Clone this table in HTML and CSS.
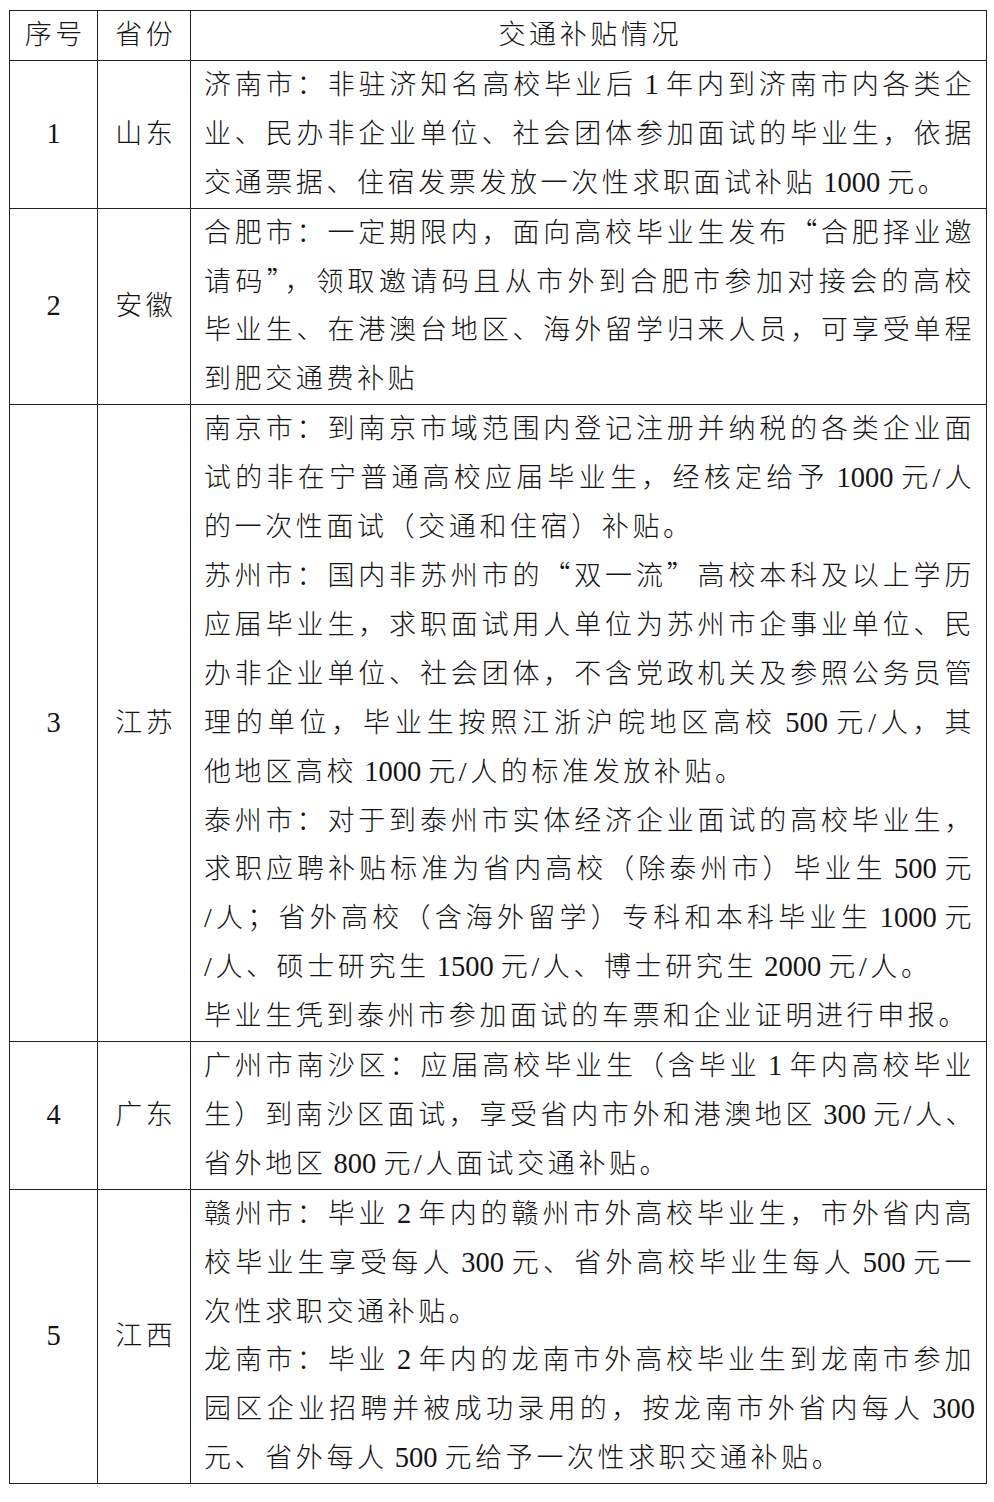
FILE: index.html
```html
<!DOCTYPE html>
<html lang="zh-CN">
<head>
<meta charset="utf-8">
<title>交通补贴情况</title>
<link rel="stylesheet" href="styles.css">
</head>
<body>
<table class="grid">
  <colgroup>
    <col class="c-no">
    <col class="c-prov">
    <col class="c-desc">
  </colgroup>
  <thead>
    <tr>
      <th class="center">序号</th>
      <th class="center">省份</th>
      <th class="center">交通补贴情况</th>
    </tr>
  </thead>
  <tbody>
    <tr>
      <td class="num"><span class="n">1</span></td>
      <td class="center">山东</td>
      <td class="desc">
        <div class="ln full">济南市：非驻济知名高校毕业后<span class="n"> 1 </span>年内到济南市内各类企</div>
        <div class="ln full">业、民办非企业单位、社会团体参加面试的毕业生，依据</div>
        <div class="ln">交通票据、住宿发票发放一次性求职面试补贴<span class="n"> 1000 </span>元。</div>
      </td>
    </tr>
    <tr>
      <td class="num"><span class="n">2</span></td>
      <td class="center">安徽</td>
      <td class="desc">
        <div class="ln full">合肥市：一定期限内，面向高校毕业生发布<span class="q">“</span>合肥择业邀</div>
        <div class="ln full">请码<span class="q">”</span>，领取邀请码且从市外到合肥市参加对接会的高校</div>
        <div class="ln full">毕业生、在港澳台地区、海外留学归来人员，可享受单程</div>
        <div class="ln">到肥交通费补贴</div>
      </td>
    </tr>
    <tr>
      <td class="num"><span class="n">3</span></td>
      <td class="center">江苏</td>
      <td class="desc">
        <div class="ln full">南京市：到南京市域范围内登记注册并纳税的各类企业面</div>
        <div class="ln full">试的非在宁普通高校应届毕业生，经核定给予<span class="n"> 1000 </span>元<span class="s">/</span>人</div>
        <div class="ln">的一次性面试（交通和住宿）补贴。</div>
        <div class="ln full">苏州市：国内非苏州市的<span class="q">“</span>双一流<span class="q">”</span>高校本科及以上学历</div>
        <div class="ln full">应届毕业生，求职面试用人单位为苏州市企事业单位、民</div>
        <div class="ln full">办非企业单位、社会团体，不含党政机关及参照公务员管</div>
        <div class="ln full">理的单位，毕业生按照江浙沪皖地区高校<span class="n"> 500 </span>元<span class="s">/</span>人，其</div>
        <div class="ln">他地区高校<span class="n"> 1000 </span>元<span class="s">/</span>人的标准发放补贴。</div>
        <div class="ln full">泰州市：对于到泰州市实体经济企业面试的高校毕业生，</div>
        <div class="ln full">求职应聘补贴标准为省内高校（除泰州市）毕业生<span class="n"> 500 </span>元</div>
        <div class="ln full"><span class="s">/</span>人；省外高校（含海外留学）专科和本科毕业生<span class="n"> 1000 </span>元</div>
        <div class="ln"><span class="s">/</span>人、硕士研究生<span class="n"> 1500 </span>元<span class="s">/</span>人、博士研究生<span class="n"> 2000 </span>元<span class="s">/</span>人。</div>
        <div class="ln">毕业生凭到泰州市参加面试的车票和企业证明进行申报。</div>
      </td>
    </tr>
    <tr>
      <td class="num"><span class="n">4</span></td>
      <td class="center">广东</td>
      <td class="desc">
        <div class="ln full">广州市南沙区：应届高校毕业生（含毕业<span class="n"> 1 </span>年内高校毕业</div>
        <div class="ln full">生）到南沙区面试，享受省内市外和港澳地区<span class="n"> 300 </span>元<span class="s">/</span>人、</div>
        <div class="ln">省外地区<span class="n"> 800 </span>元<span class="s">/</span>人面试交通补贴。</div>
      </td>
    </tr>
    <tr>
      <td class="num"><span class="n">5</span></td>
      <td class="center">江西</td>
      <td class="desc">
        <div class="ln full">赣州市：毕业<span class="n"> 2 </span>年内的赣州市外高校毕业生，市外省内高</div>
        <div class="ln full">校毕业生享受每人<span class="n"> 300 </span>元、省外高校毕业生每人<span class="n"> 500 </span>元一</div>
        <div class="ln">次性求职交通补贴。</div>
        <div class="ln full">龙南市：毕业<span class="n"> 2 </span>年内的龙南市外高校毕业生到龙南市参加</div>
        <div class="ln full">园区企业招聘并被成功录用的，按龙南市外省内每人<span class="n"> 300</span></div>
        <div class="ln">元、省外每人<span class="n"> 500 </span>元给予一次性求职交通补贴。</div>
      </td>
    </tr>
  </tbody>
</table>
</body>
</html>
```

FILE: styles.css
```css
html, body {
  margin: 0;
  padding: 0;
  background: #ffffff;
}

body {
  font-family: "Liberation Serif", "Noto Sans CJK SC", serif;
  font-size: 27px;
  font-weight: 300;
  color: #141414;
}

.grid {
  border-collapse: collapse;
  table-layout: fixed;
  width: 978px;
  margin: 10px 0 0 9px;
}

.c-no { width: 88px; }
.c-prov { width: 93px; }

.grid th,
.grid td {
  border: 1px solid #222222;
  padding: 0;
  line-height: 48.9px;
  font-weight: 300;
  letter-spacing: 3.6px;
}

.center {
  text-align: center;
  vertical-align: middle;
  padding-left: 3.6px !important;
}

.num {
  text-align: center;
  vertical-align: middle;
}

.desc {
  vertical-align: top;
  padding: 0 11px 0 13px !important;
}

.ln {
  text-align: left;
  white-space: nowrap;
}

.ln.full {
  text-align: justify;
  text-align-last: justify;
  text-justify: inter-character;
}

.n {
  letter-spacing: 0;
  font-family: "Liberation Serif", serif;
  font-size: 28.5px;
  line-height: 20px;
}

.s {
  font-family: "Liberation Serif", serif;
  font-size: 28px;
  line-height: 20px;
}

.q {
  font-family: "Noto Sans CJK SC", sans-serif;
  font-feature-settings: "fwid" 1;
  line-height: 20px;
}
```
